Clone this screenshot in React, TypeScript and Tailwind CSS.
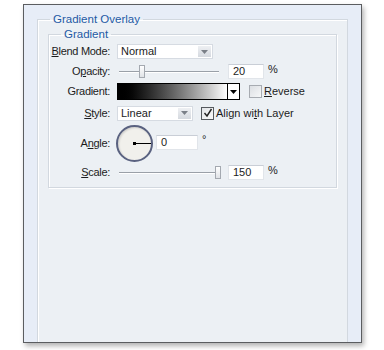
import { ReactNode } from 'react';

const font = { fontFamily: '"Liberation Sans", Arial, sans-serif' };

function U({ children }: { children: ReactNode }) {
  return <span className="underline underline-offset-[1px]">{children}</span>;
}

function Label({ children }: { children: ReactNode }) {
  return (
    <div className="w-[62px] shrink-0 flex justify-end pr-[1px]">
      <span className="whitespace-nowrap tracking-[-0.3px]">{children}</span>
    </div>
  );
}

function Arrow({ dark }: { dark?: boolean }) {
  return (
    <svg width="7" height="4" viewBox="0 0 7 4">
      <path d="M0 0 H7 L3.5 4 Z" fill={dark ? '#000' : '#7a7f87'} />
    </svg>
  );
}

function Select({ value, width }: { value: string; width: string }) {
  return (
    <div className={`${width} h-[15px] bg-white border border-[#d6dbe2] flex items-center pl-[3px] pr-[1px]`}>
      <span className="flex-1">{value}</span>
      <div className="w-[13px] h-[11px] bg-gradient-to-b from-[#eef0f3] to-[#d5d9df] flex items-center justify-center">
        <Arrow />
      </div>
    </div>
  );
}

function Slider({ pos }: { pos: number }) {
  return (
    <div className="relative w-[100px] h-[15px] ml-[2px]">
      <div className="absolute left-0 right-0 top-[7px] h-[2px] border-t border-[#9aa0a8] border-b border-b-white" />
      <div
        className="absolute top-[1px] w-[6px] h-[13px] border border-[#a4a9b0] bg-gradient-to-b from-white to-[#e0e3e7]"
        style={{ left: pos }}
      />
    </div>
  );
}

function NumInput({ value, width }: { value: string; width: string }) {
  return (
    <div className={`${width} h-[15px] bg-white border border-[#e1e5ea] border-t-[#c9ced6] flex items-center pl-[4px]`}>
      {value}
    </div>
  );
}

export default function App() {
  return (
    <div className="w-[384px] h-[350px] bg-white pt-[4px] pl-[23px] text-[11px] text-[#1c1c1c]" style={font}>
      <div className="w-[339px] h-[339px] border border-[#5b5d60] bg-[#e7edf7] shadow-[2px_3px_5px_rgba(0,0,0,0.3)] flex flex-col pt-[7px] px-[13px]">
        <fieldset className="flex-1 border border-b-0 border-[#d2d8df] shadow-[inset_1px_1px_0_#ffffff] bg-[#ecf0f4]">
          <legend className="ml-[12px] px-[3px] text-[11.5px] leading-[14px] text-[#1e5aa5]">Gradient Overlay</legend>
          <fieldset className="mx-[10px] mt-[1px] h-[161px] border border-[#d2d8df] shadow-[inset_1px_1px_0_#ffffff,1px_1px_0_#ffffff] pt-[1px]">
            <legend className="ml-[12px] px-[3px] text-[11.5px] leading-[14px] text-[#1e5aa5]">Gradient</legend>
            <div className="flex flex-col">
              <div className="h-[19px] flex items-center">
                <Label>
                  <U>B</U>lend Mode:
                </Label>
                <div className="ml-[6px]">
                  <Select value="Normal" width="w-[96px]" />
                </div>
              </div>

              <div className="h-[20px] flex items-center">
                <Label>
                  O<U>p</U>acity:
                </Label>
                <div className="ml-[6px] flex items-center">
                  <Slider pos={20} />
                  <div className="ml-[9px]">
                    <NumInput value="20" width="w-[36px]" />
                  </div>
                  <span className="ml-[4px] -mt-[3px]">%</span>
                </div>
              </div>

              <div className="h-[21px] flex items-center">
                <Label>Gradient:</Label>
                <div className="ml-[6px] flex items-center">
                  <div className="w-[123px] h-[17px] border border-black flex">
                    <div className="w-[109px] h-full bg-gradient-to-r from-black to-white" />
                    <div className="flex-1 border-l border-black bg-white flex items-center justify-center">
                      <Arrow dark />
                    </div>
                  </div>
                  <div className="ml-[9px] w-[13px] h-[13px] border border-[#a7abb1] bg-gradient-to-br from-[#dcdfe3] to-[#f6f7f8]" />
                  <span className="ml-[2px]">
                    <U>R</U>everse
                  </span>
                </div>
              </div>

              <div className="h-[22px] flex items-center">
                <Label>
                  <U>S</U>tyle:
                </Label>
                <div className="ml-[6px] flex items-center">
                  <Select value="Linear" width="w-[76px]" />
                  <div className="ml-[8px] w-[13px] h-[13px] border border-[#55595e] bg-gradient-to-br from-[#e2e5e8] to-[#fafafa] flex items-center justify-center">
                    <svg width="10" height="10" viewBox="0 0 10 10">
                      <path d="M1.5 5 L4 8 L8.5 1" fill="none" stroke="#222" strokeWidth="1.4" />
                    </svg>
                  </div>
                  <span className="ml-[2px]">
                    Align wi<U>t</U>h Layer
                  </span>
                </div>
              </div>

              <div className="h-[38px] flex items-center">
                <Label>
                  A<U>n</U>gle:
                </Label>
                <div className="ml-[5px] flex items-center">
                  <div className="relative w-[37px] h-[37px] rounded-full border-2 border-[#5a6280] bg-[#f1f0ec] shadow-[inset_1px_1px_2px_rgba(0,0,0,0.15)]">
                    <div className="absolute left-[15px] top-[15px] w-[3px] h-[3px] bg-black" />
                    <div className="absolute left-[16px] right-0 top-[16px] h-[1px] bg-black" />
                  </div>
                  <div className="ml-[3px] -mt-[1px]">
                    <NumInput value="0" width="w-[42px]" />
                  </div>
                  <span className="ml-[4px] -mt-[8px]">°</span>
                </div>
              </div>

              <div className="h-[20px] flex items-center">
                <Label>
                  <U>S</U>cale:
                </Label>
                <div className="ml-[6px] flex items-center">
                  <Slider pos={96} />
                  <div className="ml-[9px]">
                    <NumInput value="150" width="w-[36px]" />
                  </div>
                  <span className="ml-[4px] -mt-[3px]">%</span>
                </div>
              </div>
            </div>
          </fieldset>
        </fieldset>
      </div>
    </div>
  );
}
